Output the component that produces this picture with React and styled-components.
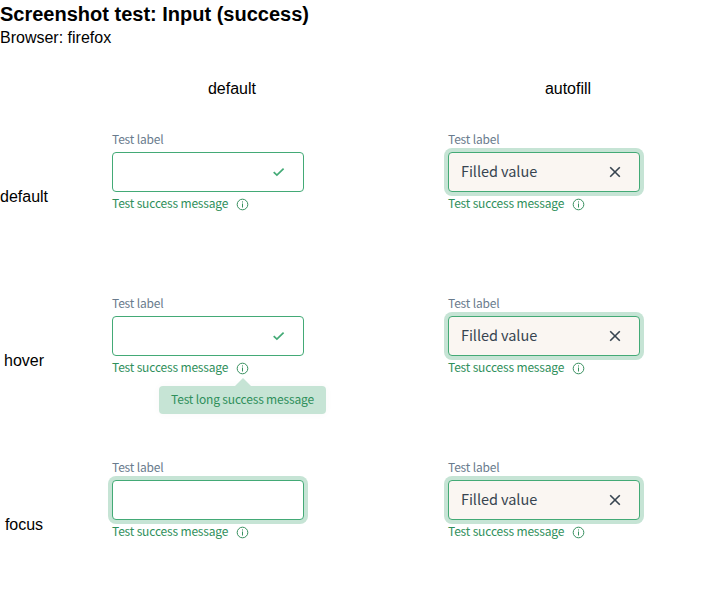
import React from 'react';
import styled, { createGlobalStyle } from 'styled-components';

const GlobalStyle = createGlobalStyle`
  * { box-sizing: border-box; }
  body {
    margin: 0;
    background: #fff;
    color: #000;
    font: 16px/18px "Liberation Sans", Arial, sans-serif;
  }
`;

const Page = styled.main`
  height: 590px;
  overflow: hidden;
`;

const Title = styled.h1`
  margin: 0;
  padding-top: 2px;
  font-size: 20px;
  line-height: 24px;
  font-weight: 700;
`;

const Browser = styled.div`
  padding-top: 3px;
  height: 50px;
`;

const Matrix = styled.div`
  display: grid;
  grid-template-columns: 48px 336px 336px;
  grid-template-rows: 38px repeat(3, 164px);
`;

const ColumnHeader = styled.div`
  padding: 4px 0 0 16px;
  width: 352px;
  text-align: center;
`;

const RowHeader = styled.div`
  align-self: center;
  padding-top: 2px;
  text-align: center;
  white-space: nowrap;
`;

const Cell = styled.div`
  padding: 17px 0 0 64px;
`;

const Field = styled.div`
  position: relative;
  width: 192px;
  font-family: "Noto Sans CJK SC", "Noto Sans", sans-serif;
  letter-spacing: -0.17px;
`;

const Label = styled.div`
  height: 21px;
  font-size: 12px;
  line-height: 16px;
  color: #697b8d;
`;

const InputBox = styled.div`
  display: flex;
  align-items: center;
  height: 40px;
  padding: 0 16px 0 12px;
  border: 1px solid #43aa76;
  border-radius: 4px;
  background: ${(p) => (p.$filled ? '#faf6f2' : '#fff')};
  box-shadow: ${(p) => (p.$ring ? '0 0 0 4px #c6e4d5' : 'none')};
`;

const Value = styled.span`
  padding-bottom: 2px;
  color: #374450;
  font-size: 14.5px;
  line-height: 22px;
  letter-spacing: -0.06px;
`;

const IconSvg = styled.svg`
  display: block;
  flex: none;
  margin-left: auto;
`;

const Message = styled.div`
  display: flex;
  align-items: center;
  height: 22px;
  font-size: 12px;
  line-height: 16px;
  color: #2f8f5b;
  white-space: nowrap;
`;

const InfoSvg = styled.svg`
  margin: 3px 0 0 8px;
`;

const Tooltip = styled.div`
  position: absolute;
  top: 91px;
  left: 47px;
  width: 167px;
  height: 28px;
  border-radius: 4px;
  background: #c6e4d5;
  box-shadow: 0 0 8px rgba(0, 0, 0, 0.03);
  color: #2f8f5b;
  font-size: 12px;
  line-height: 25px;
  text-align: center;
  white-space: nowrap;

  &::before {
    content: "";
    position: absolute;
    top: -8px;
    left: 76px;
    border: 8px solid transparent;
    border-top: 0;
    border-bottom-color: #c6e4d5;
  }
`;

const Check = () => (
  <IconSvg width="16" height="16" viewBox="0 0 16 16" fill="none" stroke="#43aa76" strokeWidth="1.7">
    <path d="M2.7 8.2 5.9 11.2 12.6 4.7" />
  </IconSvg>
);

const Cross = () => (
  <IconSvg width="16" height="16" viewBox="0 0 16 16" fill="none" stroke="#374450" strokeWidth="1.6">
    <path d="m3.2 3.2 9.6 9.6M12.8 3.2 3.2 12.8" />
  </IconSvg>
);

const Info = () => (
  <InfoSvg width="13" height="13" viewBox="0 0 13 13" fill="none" stroke="#38905f">
    <circle cx="6.5" cy="6.5" r="5.3" />
    <path d="M6.5 5.5v4M6.5 3.4v1.1" />
  </InfoSvg>
);

function InputField({ filled, focused, tooltip }) {
  return (
    <Field>
      <Label>Test label</Label>
      <InputBox $filled={filled} $ring={filled || focused}>
        {filled && <Value>Filled value</Value>}
        {filled ? <Cross /> : !focused && <Check />}
      </InputBox>
      <Message>
        Test success message
        <Info />
      </Message>
      {tooltip && <Tooltip>Test long success message</Tooltip>}
    </Field>
  );
}

export default function App() {
  return (
    <Page>
      <GlobalStyle />
      <Title>Screenshot test: Input (success)</Title>
      <Browser>Browser: firefox</Browser>
      <Matrix>
        <span />
        <ColumnHeader>default</ColumnHeader>
        <ColumnHeader>autofill</ColumnHeader>
        {['default', 'hover', 'focus'].map((state) => (
          <React.Fragment key={state}>
            <RowHeader>{state}</RowHeader>
            <Cell>
              <InputField focused={state === 'focus'} tooltip={state === 'hover'} />
            </Cell>
            <Cell>
              <InputField filled />
            </Cell>
          </React.Fragment>
        ))}
      </Matrix>
    </Page>
  );
}
